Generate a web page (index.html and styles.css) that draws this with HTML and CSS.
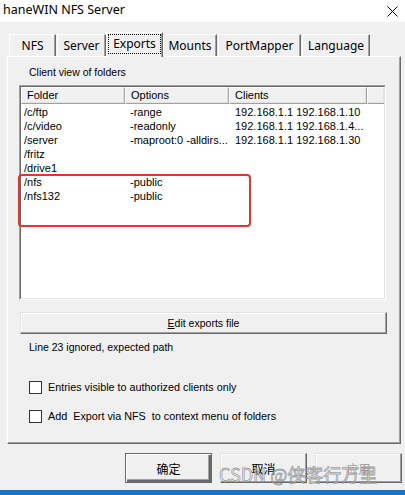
FILE: index.html
```
<!DOCTYPE html>
<html>
<head>
<meta charset="utf-8">
<link rel="stylesheet" href="styles.css">
</head>
<body>
<div class="titlebar">
  <span class="title">haneWIN NFS Server</span>
  <svg class="close" width="11" height="11" viewBox="0 0 11 11"><path d="M0.5 0.5 L10.5 10.5 M10.5 0.5 L0.5 10.5" stroke="#000" stroke-width="1"/></svg>
</div>
<div class="dialog">
  <div class="tabs">
    <div class="tab t-nfs">NFS</div>
    <div class="tab t-server">Server</div>
    <div class="tab t-exports sel"><span class="focus">Exports</span></div>
    <div class="tab t-mounts">Mounts</div>
    <div class="tab t-pm">PortMapper</div>
    <div class="tab t-lang">Language</div>
  </div>
  <div class="panel">
    <div class="caption">Client view of folders</div>
    <div class="list">
      <div class="list-inner">
        <div class="hdr">
          <div class="hc c1">Folder</div>
          <div class="hc c2">Options</div>
          <div class="hc c3">Clients</div>
          <div class="hc c4"></div>
        </div>
        <div class="rows">
          <div class="row"><span class="d1">/c/ftp</span><span class="d2">-range</span><span class="d3">192.168.1.1 192.168.1.10</span></div>
          <div class="row"><span class="d1">/c/video</span><span class="d2">-readonly</span><span class="d3">192.168.1.1 192.168.1.4...</span></div>
          <div class="row"><span class="d1">/server</span><span class="d2">-maproot:0 -alldirs...</span><span class="d3">192.168.1.1 192.168.1.30</span></div>
          <div class="row"><span class="d1">/fritz</span><span class="d2"></span><span class="d3"></span></div>
          <div class="row"><span class="d1">/drive1</span><span class="d2"></span><span class="d3"></span></div>
          <div class="row"><span class="d1">/nfs</span><span class="d2">-public</span><span class="d3"></span></div>
          <div class="row"><span class="d1">/nfs132</span><span class="d2">-public</span><span class="d3"></span></div>
        </div>
      </div>
      <div class="mark"></div>
    </div>
    <div class="editbtn"><span><span class="u">E</span>dit exports file</span></div>
    <div class="msg">Line 23 ignored, expected path</div>
    <div class="chk chk1"><span class="box"></span><span class="lbl">Entries visible to authorized clients only</span></div>
    <div class="chk chk2"><span class="box"></span><span class="lbl">Add  Export via NFS  to context menu of folders</span></div>
  </div>
  <div class="buttons">
    <div class="btn def">确定</div>
    <div class="btn">取消</div>
    <div class="btn dis">应用</div>
  </div>
</div>
<div class="watermark">CSDN @侠客行万里</div>
<div class="taskbar"></div>
</body>
</html>
```
FILE: styles.css
```
html, body {
  margin: 0;
  padding: 0;
}
body {
  width: 405px;
  height: 495px;
  background: #f0f0f0;
  overflow: hidden;
  position: relative;
  font-family: "Liberation Sans", Arial, sans-serif;
  font-size: 10.5px;
  color: #000;
}
.titlebar {
  height: 22px;
  background: #fff;
  display: flex;
  align-items: center;
  justify-content: space-between;
  padding: 0 7px 3px 3px;
  box-sizing: border-box;
}
.title {
  font-family: "Noto Sans", sans-serif;
  font-size: 12.5px;
}
.close {
  display: block;
  margin-top: 3px;
}
.dialog {
  padding: 10px 4px 0 7px;
}
.tabs {
  display: flex;
  align-items: flex-start;
  height: 25px;
  margin-bottom: -1px;
  padding-left: 2px;
  font-family: "Noto Sans", sans-serif;
  font-size: 12px;
}
.tab {
  margin-top: 2px;
  height: 22px;
  box-sizing: border-box;
  border-top: 1px solid #fff;
  border-left: 1px solid #fff;
  border-right: 1px solid #696969;
  box-shadow: inset -1px 0 #a0a0a0;
  display: flex;
  align-items: center;
  justify-content: center;
  padding-bottom: 1px;
  background: #f0f0f0;
}
.t-nfs { width: 47px; margin-right: 1px; }
.t-server { width: 49px; }
.t-exports { width: 57px; }
.t-mounts { width: 54px; margin-right: 1px; }
.t-pm { width: 83px; margin-right: 1px; }
.t-lang { width: 68px; }
.tab.sel {
  margin-top: 0;
  height: 25px;
  position: relative;
  z-index: 1;
  padding: 1px 1px 3px 1px;
  align-items: stretch;
}
.focus {
  flex: 1;
  display: flex;
  align-items: center;
  justify-content: center;
  border: 1px dotted #000;
  padding-bottom: 1px;
}
.panel {
  width: 394px;
  height: 388px;
  box-sizing: border-box;
  border: 1px solid;
  border-color: #fff #696969 #696969 #fff;
  box-shadow: inset -1px -1px #a0a0a0;
  display: flex;
  flex-direction: column;
}
.caption {
  margin: 8px 0 0 21px;
  line-height: 14px;
}
.list {
  margin: 6px 0 0 11px;
  width: 367px;
  height: 215px;
  box-sizing: border-box;
  border: 1px solid;
  border-color: #a0a0a0 #fff #fff #a0a0a0;
  position: relative;
}
.list-inner {
  height: 100%;
  box-sizing: border-box;
  border: 1px solid;
  border-color: #696969 #e3e3e3 #e3e3e3 #696969;
  background: #fff;
  font-size: 11px;
}
.hdr {
  display: flex;
  height: 17px;
  background: #f0f0f0;
}
.hc {
  box-sizing: border-box;
  height: 17px;
  border-top: 1px solid #fff;
  border-left: 1px solid #fff;
  border-right: 1px solid #a0a0a0;
  border-bottom: 1px solid #a0a0a0;
  box-shadow: inset -1px -1px #e3e3e3;
  line-height: 15px;
  padding-left: 5px;
}
.c1 { width: 104px; }
.c2 { width: 104px; }
.c3 { width: 138px; }
.c4 { flex: 1; border-right: none; }
.rows {
  padding-top: 1px;
}
.row {
  display: flex;
  height: 14px;
  line-height: 14px;
  white-space: nowrap;
}
.d1 { width: 104px; padding-left: 3px; box-sizing: border-box; }
.d2 { width: 104px; padding-left: 5px; box-sizing: border-box; }
.d3 { width: 138px; padding-left: 6px; box-sizing: border-box; }
.mark {
  position: absolute;
  left: -2px;
  top: 88px;
  width: 233px;
  height: 53px;
  box-sizing: border-box;
  border: 2.5px solid #e8322b;
  border-radius: 4px;
}
.editbtn {
  margin: 12px 0 0 12px;
  width: 367px;
  height: 22px;
  box-sizing: border-box;
  border: 1px solid;
  border-color: #e3e3e3 #696969 #696969 #e3e3e3;
  box-shadow: inset -1px -1px #a0a0a0, inset 1px 1px #fff;
  display: flex;
  align-items: center;
  justify-content: center;
  font-size: 10.5px;
}
.u {
  text-decoration: underline;
}
.msg {
  margin: 6px 0 0 21px;
  line-height: 14px;
}
.chk {
  display: flex;
  align-items: center;
  margin-left: 21px;
  height: 14px;
}
.chk1 { margin-top: 26px; }
.chk2 { margin-top: 15px; }
.box {
  width: 13px;
  height: 13px;
  box-sizing: border-box;
  border: 1px solid #333;
  background: #fff;
  margin-right: 6px;
}
.lbl {
  white-space: pre;
  font-size: 10.8px;
}
.buttons {
  display: flex;
  justify-content: flex-end;
  gap: 8px;
  margin: 9px -1px 0 0;
}
.btn {
  width: 87px;
  height: 30px;
  box-sizing: border-box;
  border: 1px solid;
  border-color: #e3e3e3 #696969 #696969 #e3e3e3;
  box-shadow: inset -1px -1px #a0a0a0, inset 1px 1px #fff;
  display: flex;
  align-items: center;
  justify-content: center;
  font-family: "Noto Sans CJK SC", sans-serif;
  font-size: 12px;
  padding-top: 1px;
}
.btn.def {
  border-color: #696969;
  box-shadow: inset 1px 1px #fff, inset -2px -2px #696969, inset -3px -3px #a0a0a0;
}
.btn.dis {
  color: #a0a0a0;
}
.watermark {
  position: absolute;
  left: 219px;
  top: 463px;
  font-family: "Noto Sans CJK SC", sans-serif;
  font-size: 18px;
  line-height: 22px;
  color: rgba(250, 250, 250, 0.55);
  -webkit-text-stroke: 0.8px rgba(110, 110, 110, 0.65);
  white-space: nowrap;
}
.taskbar {
  position: absolute;
  left: 0;
  bottom: 0;
  width: 405px;
  height: 5px;
  background: #1a73c0;
}
```
